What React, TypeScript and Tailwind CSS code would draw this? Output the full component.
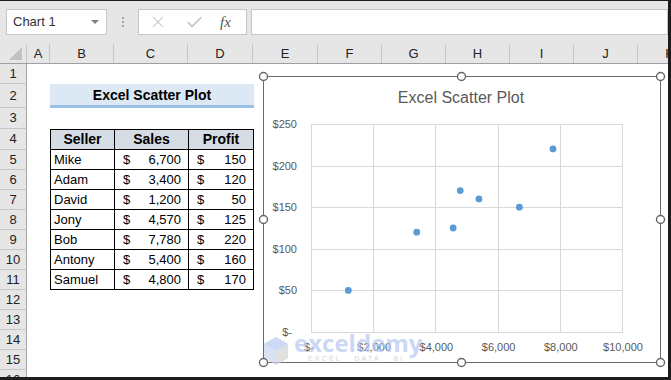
import { X, Check } from "lucide-react"

type Col = { label: string; w: number }

const cols: Col[] = [
  { label: "A", w: 23 },
  { label: "B", w: 64 },
  { label: "C", w: 74 },
  { label: "D", w: 65 },
  { label: "E", w: 65 },
  { label: "F", w: 64 },
  { label: "G", w: 64 },
  { label: "H", w: 64 },
  { label: "I", w: 64 },
  { label: "J", w: 64 },
  { label: "K", w: 64 },
]

const rowHeights = [20, 24, 21, 21, 20, 20, 20, 20, 20, 20, 20, 20, 20, 20, 20, 20]

const sellers = [
  { name: "Mike", sales: 6700, profit: 150 },
  { name: "Adam", sales: 3400, profit: 120 },
  { name: "David", sales: 1200, profit: 50 },
  { name: "Jony", sales: 4570, profit: 125 },
  { name: "Bob", sales: 7780, profit: 220 },
  { name: "Antony", sales: 5400, profit: 160 },
  { name: "Samuel", sales: 4800, profit: 170 },
]

const font = { fontFamily: '"Liberation Sans", Arial, sans-serif' }

function TopBar() {
  return (
    <div className="flex h-[43px] items-start bg-[#e6e6e6] pt-[8px]">
      <div className="ml-[6px] flex h-[26px] w-[101px] items-center justify-between border border-[#c6c6c6] bg-white pl-[6px] pr-[7px]">
        <span className="text-[13px] text-[#333]">Chart 1</span>
        <span className="h-0 w-0 border-x-[4px] border-t-[4px] border-x-transparent border-t-[#808080]" />
      </div>
      <div className="ml-[15px] mt-[8px] flex flex-col gap-[2px]">
        <span className="h-[2px] w-[2px] bg-[#a6a6a6]" />
        <span className="h-[2px] w-[2px] bg-[#a6a6a6]" />
        <span className="h-[2px] w-[2px] bg-[#a6a6a6]" />
      </div>
      <div className="ml-[14px] flex h-[26px] w-[109px] items-center border border-[#c6c6c6] bg-white">
        <X size={18} strokeWidth={1.4} className="ml-[10px] text-[#bfbfbf]" />
        <Check size={19} strokeWidth={2} className="ml-[18px] text-[#bfbfbf]" />
        <span className="ml-[16px] text-[15px] italic text-[#555]" style={{ fontFamily: '"Liberation Serif", serif' }}>
          fx
        </span>
      </div>
      <div className="ml-[4px] h-[26px] flex-1 border border-[#c6c6c6] bg-white" />
    </div>
  )
}

function ColumnHeader() {
  return (
    <div className="flex h-[20px] border-b border-[#9f9f9f] bg-[#e6e6e6]">
      <div className="flex w-[27px] shrink-0 items-end justify-end border-r border-[#c6c6c6] pb-[3px] pr-[4px]">
        <span className="h-0 w-0 border-b-[13px] border-l-[13px] border-b-[#c2c2c2] border-l-transparent" />
      </div>
      {cols.map((c) => (
        <div
          key={c.label}
          className="flex shrink-0 items-center justify-center border-r border-[#c6c6c6] text-[13px] text-[#222]"
          style={{ width: c.w }}
        >
          {c.label}
        </div>
      ))}
    </div>
  )
}

function money(n: number) {
  return n.toLocaleString("en-US")
}

function RowContent({ idx }: { idx: number }) {
  const row = idx + 1
  if (row === 2) {
    return (
      <div className="flex h-full">
        <div className="w-[23px]" />
        <div className="flex h-full w-[204px] items-center justify-center border-b-[3px] border-[#9bc2e6] bg-[#dce9f5] pt-[1px] text-[14px] font-bold text-black">
          Excel Scatter Plot
        </div>
      </div>
    )
  }
  if (row === 4) {
    return (
      <div className="flex h-full">
        <div className="w-[23px]" />
        <div className="flex w-[204px] border border-black bg-[#d6dce4] text-[14px] font-bold text-black">
          <div className="flex w-[64px] items-center justify-center border-r border-black">Seller</div>
          <div className="flex w-[74px] items-center justify-center border-r border-black">Sales</div>
          <div className="flex flex-1 items-center justify-center">Profit</div>
        </div>
      </div>
    )
  }
  if (row >= 5 && row <= 11) {
    const s = sellers[row - 5]
    return (
      <div className="flex h-full">
        <div className="w-[23px]" />
        <div className="flex w-[204px] border-x border-b border-black text-[13px] text-black">
          <div className="flex w-[64px] items-center border-r border-black pl-[3px]">{s.name}</div>
          <div className="flex w-[74px] items-center justify-between border-r border-black pl-[8px] pr-[7px]">
            <span>$</span>
            <span>{money(s.sales)}</span>
          </div>
          <div className="flex flex-1 items-center justify-between pl-[8px] pr-[7px]">
            <span>$</span>
            <span>{money(s.profit)}</span>
          </div>
        </div>
      </div>
    )
  }
  return null
}

function Sheet() {
  return (
    <div className="flex flex-col">
      {rowHeights.map((h, i) => (
        <div key={i} className="flex shrink-0" style={{ height: h }}>
          <div className="flex w-[27px] shrink-0 items-center justify-center border-b border-r border-b-[#c6c6c6] border-r-[#a6a6a6] bg-[#e6e6e6] text-[13px] text-[#222]">
            {i + 1}
          </div>
          <div className="flex-1 bg-white">
            <RowContent idx={i} />
          </div>
        </div>
      ))}
    </div>
  )
}

function Chart() {
  const x0 = 311
  const x1 = 622
  const y0 = 332
  const y1 = 124
  const px = (v: number) => x0 + (v / 10000) * (x1 - x0)
  const py = (v: number) => y0 - (v / 250) * (y0 - y1)
  const xt = [0, 2000, 4000, 6000, 8000, 10000]
  const yt = [0, 50, 100, 150, 200, 250]
  const handles = [
    [263.5, 76.5],
    [461.5, 76.5],
    [660.5, 76.5],
    [263.5, 219.5],
    [660.5, 219.5],
    [263.5, 362.5],
    [461.5, 362.5],
    [660.5, 362.5],
  ]
  return (
    <svg className="pointer-events-none absolute left-0 top-0" width={668} height={377} style={font}>
      <rect x={263.5} y={76.5} width={397} height={286} fill="#fff" stroke="#6b6b6b" />
      <text x={461} y={103} textAnchor="middle" fontSize={16} fill="#595959">
        Excel Scatter Plot
      </text>
      {xt.map((t) => (
        <line key={"vx" + t} x1={Math.round(px(t)) + 0.5} x2={Math.round(px(t)) + 0.5} y1={y1} y2={y0} stroke="#d9d9d9" />
      ))}
      {yt.map((t) => (
        <line key={"hy" + t} x1={x0} x2={x1 + 1} y1={Math.round(py(t)) + 0.5} y2={Math.round(py(t)) + 0.5} stroke="#d9d9d9" />
      ))}
      {yt.map((t) => (
        <text key={"ly" + t} x={t === 0 ? 292 : 297} y={py(t) + 4} textAnchor="end" fontSize={11} fill="#595959">
          {t === 0 ? "$-" : "$" + t}
        </text>
      ))}
      {xt.map((t) => (
        <text key={"lx" + t} x={t === 0 ? px(t) - 2 : px(t) + 1} y={351} textAnchor="middle" fontSize={11} fill="#595959">
          {t === 0 ? "$-" : "$" + money(t)}
        </text>
      ))}
      {sellers.map((s) => (
        <circle key={s.name} cx={px(s.sales)} cy={py(s.profit)} r={3.4} fill="#5b9bd5" />
      ))}
      <g opacity={0.7}>
        <polygon points="276,337 288,344 288,358 276,365 264,358 264,344" fill="#c9d5f2" />
        <polygon points="276,351 288,344 288,358 276,365" fill="#d4d4d4" />
        <polygon points="276,351 264,344 276,337 288,344" fill="#b9cbf3" />
        <text x={294} y={352} fontSize={24} fontWeight="bold" fill="#b6c8f2" style={{ fontFamily: '"Open Sans", sans-serif' }}>
          exceldemy
        </text>
        <text x={308} y={361} fontSize={7} letterSpacing={2.2} fill="#c4c4c4">
          EXCEL · DATA · BI
        </text>
      </g>
      {handles.map(([cx, cy], i) => (
        <circle key={i} cx={cx} cy={cy} r={4} fill="#fff" stroke="#666" strokeWidth={1.4} />
      ))}
    </svg>
  )
}

export default function App() {
  return (
    <div
      className="relative h-[380px] w-[671px] overflow-hidden border-b-[3px] border-r-[3px] border-[#1c1c1c] bg-white"
      style={font}
    >
      <div className="h-[1px] bg-[#1c1c1c]" />
      <TopBar />
      <ColumnHeader />
      <Sheet />
      <Chart />
    </div>
  )
}
